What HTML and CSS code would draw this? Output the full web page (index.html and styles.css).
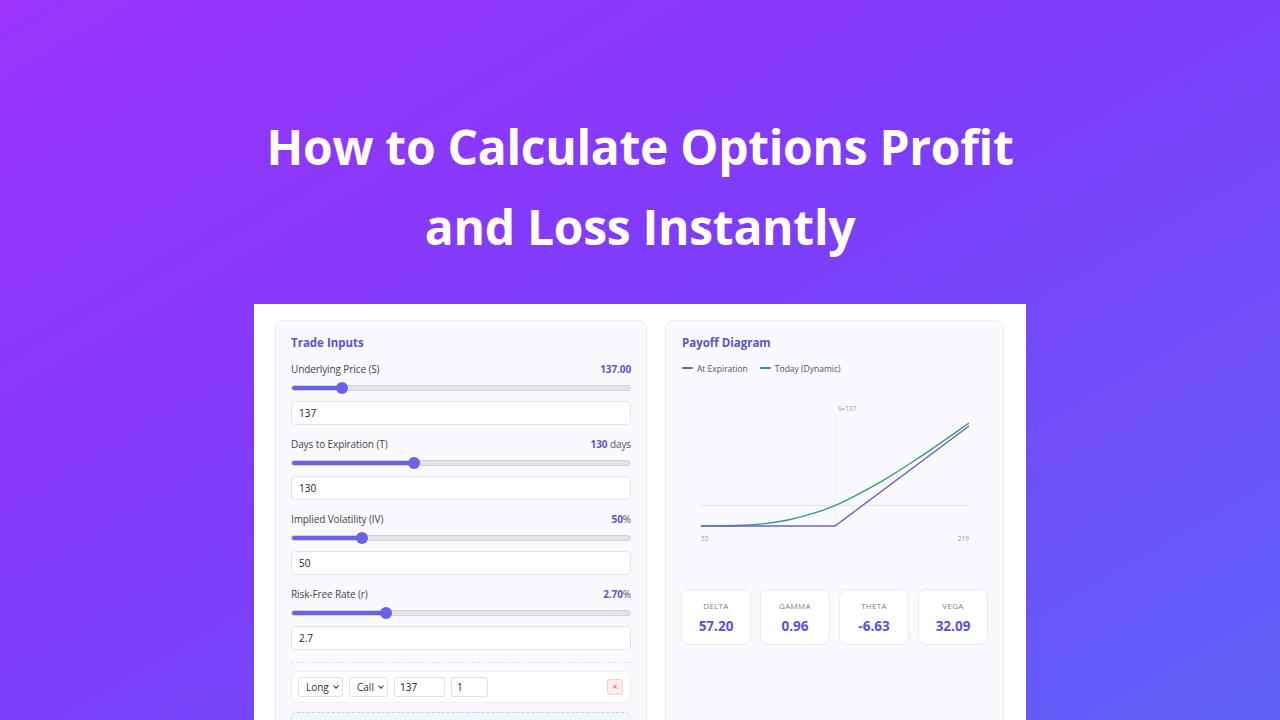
FILE: index.html
```html
<!DOCTYPE html>
<html lang="en">
<head>
<meta charset="utf-8">
<title>Options Profit Calculator</title>
<link rel="stylesheet" href="styles.css">
</head>
<body>
<h1 class="title">How to Calculate Options Profit<br>and Loss Instantly</h1>
<div class="frame">
  <div class="grid">
    <section class="card inputs">
      <h2 class="card-title">Trade Inputs</h2>

      <div class="field">
        <div class="field-head"><span class="label">Underlying Price (S)</span><span class="val"><b>137.00</b></span></div>
        <input class="range" type="range" min="1" max="1000" value="137" style="--fill:14.4%">
        <input class="text" type="text" value="137">
      </div>

      <div class="field">
        <div class="field-head"><span class="label">Days to Expiration (T)</span><span class="val"><b>130</b> days</span></div>
        <input class="range" type="range" min="1" max="365" value="130" style="--fill:35.9%">
        <input class="text" type="text" value="130">
      </div>

      <div class="field">
        <div class="field-head"><span class="label">Implied Volatility (IV)</span><span class="val"><b>50</b>%</span></div>
        <input class="range" type="range" min="1" max="250" value="50" style="--fill:20.6%">
        <input class="text" type="text" value="50">
      </div>

      <div class="field">
        <div class="field-head"><span class="label">Risk-Free Rate (r)</span><span class="val"><b>2.70</b>%</span></div>
        <input class="range" type="range" min="0" max="10" step="0.1" value="2.7" style="--fill:27.6%">
        <input class="text" type="text" value="2.7">
      </div>

      <hr class="divider">

      <div class="leg">
        <span class="sel-wrap"><select class="sel sel-long"><option>Long</option><option>Short</option></select></span>
        <span class="sel-wrap"><select class="sel sel-call"><option>Call</option><option>Put</option></select></span>
        <input class="leg-in strike" type="text" value="137">
        <input class="leg-in qty" type="text" value="1">
        <button class="remove" type="button">×</button>
      </div>

      <div class="note"></div>
    </section>

    <section class="card payoff">
      <h2 class="card-title">Payoff Diagram</h2>
      <div class="legend">
        <span class="leg-item"><i class="sw sw-exp"></i>At Expiration</span>
        <span class="leg-item"><i class="sw sw-today"></i>Today (Dynamic)</span>
      </div>
      <svg class="chart" width="306" height="170" viewBox="0 0 306 170">
        <text x="165" y="27" class="ctext" text-anchor="middle">S=137</text>
        <line x1="153" y1="30" x2="153" y2="142" stroke="#e4e4ec" stroke-width="0.8" stroke-dasharray="2 2"/>
        <line x1="19" y1="121.5" x2="287" y2="121.5" stroke="#e2e2ea" stroke-width="1"/>
        <path d="M19,142 L31.25,141.95 Q43.5,141.9 55.75,141.48 Q68,141.05 80.25,139.88 Q92.5,138.7 104.75,136.25 Q117,133.8 129.3,129.95 Q141.6,126.1 147.3,123.8 Q153,121.5 159.55,118.55 Q166.1,115.6 178.35,109.15 Q190.6,102.7 202.85,95.35 Q215.1,88 227.35,80 Q239.6,72 251.85,63.6 Q264.1,55.2 275.55,47.1 L287,39" fill="none" stroke="#2c9f78" stroke-width="1.3"/>
        <polyline points="19,142 153,142 287,42" fill="none" stroke="#6a5fcf" stroke-width="1.4"/>
        <text x="19" y="157" class="ctext">55</text>
        <text x="287" y="157" class="ctext" text-anchor="end">219</text>
      </svg>
      <div class="greeks">
        <div class="greek"><span class="g-label">Delta</span><span class="g-val">57.20</span></div>
        <div class="greek"><span class="g-label">Gamma</span><span class="g-val">0.96</span></div>
        <div class="greek"><span class="g-label">Theta</span><span class="g-val">-6.63</span></div>
        <div class="greek"><span class="g-label">Vega</span><span class="g-val">32.09</span></div>
      </div>
    </section>
  </div>
</div>
</body>
</html>
```
FILE: styles.css
```css
* { box-sizing: border-box; }

html, body {
  margin: 0;
  width: 1280px;
  height: 720px;
  overflow: hidden;
}

body {
  background: linear-gradient(150deg, #9c34fd 0%, #7f3cfb 45%, #5f62f9 100%);
  font-family: "Open Sans", "Noto Sans", sans-serif;
  color: #333;
}

.title {
  margin: 107px 0 0;
  text-align: center;
  color: #fff;
  font-family: "Open Sans", sans-serif;
  font-weight: 700;
  font-size: 48px;
  line-height: 80px;
  letter-spacing: -0.3px;
}

.frame {
  width: 772px;
  margin: 37px auto 0;
  background: #fff;
  padding: 16px 22px 0 21px;
  height: 416px;
  overflow: hidden;
}

.grid {
  display: grid;
  grid-template-columns: 372px 339px;
  gap: 18px;
  height: 420px;
}

.card {
  background: #f9f9fe;
  border: 1px solid #ececf3;
  border-radius: 9px;
  overflow: hidden;
}

.inputs { padding: 14px 15px; }
.payoff { padding: 14px 15px 14px 16px; }

.card-title {
  margin: 0;
  font-size: 11.5px;
  line-height: 16px;
  font-weight: 700;
  color: #5b54d3;
}

.field { margin-top: 11px; }
.field + .field { margin-top: 12px; }

.field-head {
  display: flex;
  justify-content: space-between;
  align-items: center;
  height: 14px;
  font-size: 10px;
  line-height: 14px;
  color: #444;
  letter-spacing: -0.1px;
}

.val { color: #555; }
.val b { color: #5b54d3; font-weight: 700; }

.range {
  -webkit-appearance: none;
  appearance: none;
  display: block;
  width: 100%;
  height: 12px;
  margin: 6px 0 0;
  background: transparent;
}

.range::-webkit-slider-runnable-track {
  height: 6px;
  border-radius: 3px;
  border: 1px solid #cfcfd6;
  background: linear-gradient(to right, #6a62e6 var(--fill), #e4e4e8 var(--fill));
}

.range::-webkit-slider-thumb {
  -webkit-appearance: none;
  width: 12px;
  height: 12px;
  margin-top: -4px;
  border-radius: 50%;
  background: #6a62e6;
  border: none;
}

.text {
  display: block;
  width: 100%;
  height: 24px;
  margin-top: 7px;
  padding: 0 7px;
  border: 1px solid #e3e4ea;
  border-radius: 4px;
  background: #fff;
  font-family: inherit;
  font-size: 10px;
  color: #222;
  outline: none;
}

.divider {
  margin: 12px 0 0;
  border: 0;
  border-top: 1px dashed #e0e0ea;
  height: 0;
}

.leg {
  margin-top: 8px;
  height: 32px;
  display: flex;
  align-items: center;
  gap: 6px;
  padding: 0 7px 0 6px;
  background: #fff;
  border: 1px solid #eceef3;
  border-radius: 6px;
}

.sel-wrap {
  position: relative;
  display: block;
  height: 20px;
}

.sel-wrap::after {
  content: "";
  position: absolute;
  right: 5px;
  top: 6.5px;
  width: 3px;
  height: 3px;
  border-right: 1.4px solid #333;
  border-bottom: 1.4px solid #333;
  transform: rotate(45deg);
  pointer-events: none;
}

.sel {
  -webkit-appearance: none;
  appearance: none;
  display: block;
  height: 20px;
  font-family: inherit;
  font-size: 10px;
  color: #333;
  border: 1px solid #dfe1e8;
  border-radius: 3px;
  background: #fff;
  padding: 0 0 0 7px;
  outline: none;
}
.sel-long { width: 45px; }
.sel-call { width: 39px; }

.leg-in {
  height: 20px;
  padding: 0 5px;
  font-family: inherit;
  font-size: 10px;
  color: #222;
  border: 1px solid #dfe1e8;
  border-radius: 3px;
  background: #fff;
  outline: none;
}
.strike { width: 51px; }
.qty { width: 37px; }

.remove {
  margin-left: auto;
  width: 16px;
  height: 16px;
  padding: 0;
  border: 1px solid #f5cfcf;
  border-radius: 3px;
  background: #fdeeee;
  color: #e05a5a;
  font-size: 9px;
  line-height: 14px;
  font-family: inherit;
}

.note {
  margin-top: 9px;
  height: 60px;
  background: #eef6fe;
  border: 1px dashed #bcd9f4;
  border-radius: 6px;
}

.legend {
  display: flex;
  gap: 12px;
  margin-top: 10px;
  height: 14px;
  align-items: center;
  font-size: 8.5px;
  color: #555;
}

.leg-item { display: flex; align-items: center; gap: 4px; }

.sw {
  display: inline-block;
  width: 11px;
  height: 2px;
  border-radius: 1px;
}
.sw-exp { background: #6a5fcf; }
.sw-today { background: #2c9f78; }

.chart {
  display: block;
  margin-top: 9px;
}

.ctext {
  font-family: "Open Sans", sans-serif;
  font-size: 6.5px;
  fill: #999;
}

.greeks {
  display: grid;
  grid-template-columns: repeat(4, 70px);
  gap: 9px;
  margin-top: 35px;
  margin-left: -1px;
}

.greek {
  height: 56px;
  background: #fff;
  border: 1px solid #eaeaf2;
  border-radius: 8px;
  display: flex;
  flex-direction: column;
  align-items: center;
  padding-top: 10px;
}

.g-label {
  font-size: 8px;
  line-height: 12px;
  text-transform: uppercase;
  letter-spacing: 0.3px;
  color: #808080;
}

.g-val {
  margin-top: 6px;
  font-size: 13.5px;
  line-height: 16px;
  font-weight: 700;
  color: #5b54d3;
}
```
